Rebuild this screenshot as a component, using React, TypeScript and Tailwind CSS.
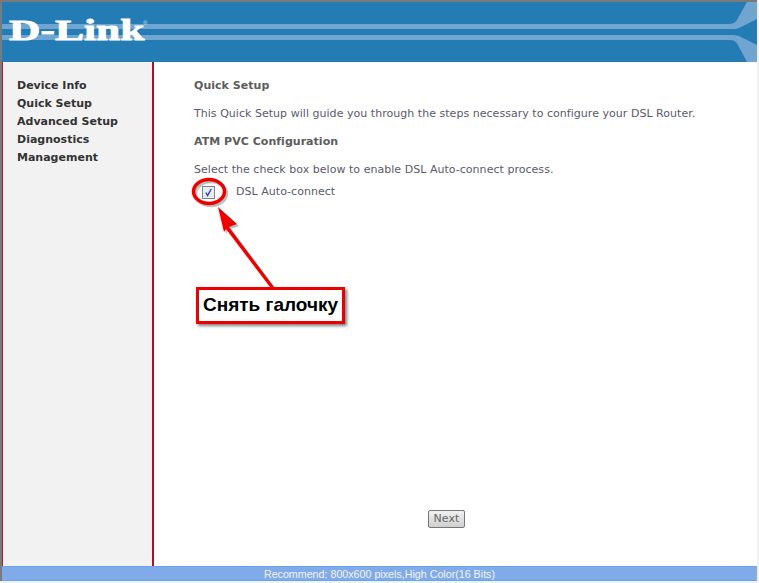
const sans = "font-['DejaVu_Sans',sans-serif]";

const menuItems = ["Device Info", "Quick Setup", "Advanced Setup", "Diagnostics", "Management"];

function HeaderArt() {
  return (
    <svg className="absolute inset-0 h-[60px] w-full" viewBox="0 0 755 60" fill="#6fa5d0">
      <rect x="0" y="22" width="730" height="5" />
      <rect x="0" y="33" width="730" height="5" />
      <path d="M726 22 C732 22 734 20 736 16 L745 0 L755 0 L755 17 L737 26 C735 27 732 27 726 27 Z" />
      <path d="M726 33 C732 33 734 33 737 34 L755 43 L755 60 L745 60 L736 43 C734 39 732 38 726 38 Z" />
    </svg>
  );
}

function Annotation() {
  return (
    <div className="absolute left-0 top-0">
      <svg className="absolute left-[180px] top-[170px] overflow-visible" width="110" height="130" viewBox="0 0 110 130" fill="none">
        <g opacity="0.35" transform="translate(2 2)">
          <ellipse cx="29" cy="21.5" rx="15.5" ry="12" stroke="#444" strokeWidth="3.5" />
          <path d="M38 37 L57 54 L49 57 L94 117 L90 117 L46 59 L44 62 Z" fill="#444" />
        </g>
        <ellipse cx="29" cy="21.5" rx="15.5" ry="12" stroke="#ee0000" strokeWidth="3.5" />
        <path d="M38 37 L57 54 L49 57 L94 117 L90 117 L46 59 L44 62 Z" fill="#ee0000" />
      </svg>
      <div className="absolute left-[196px] top-[287px] flex h-[37px] w-[149px] items-center justify-center whitespace-nowrap border-[3px] border-[#ee0000] bg-white font-['Liberation_Sans',sans-serif] text-[19px] font-bold text-black shadow-[2px_2px_3px_rgba(0,0,0,0.5)]">
        Снять галочку
      </div>
    </div>
  );
}

export default function App() {
  return (
    <div className={`relative flex h-[583px] w-[759px] flex-col overflow-hidden bg-[#f1f1f1] ${sans}`}>
      <div className="flex h-[581px] w-[757px] flex-col border-l-2 border-t-2 border-[#7a7a7a] bg-white">
        <header className="relative h-[60px] shrink-0 bg-[#247cb4]">
          <HeaderArt />
          <span className="absolute left-[7px] top-[12px] origin-left scale-x-[1.5] font-['Liberation_Serif',serif] text-[29px] font-bold leading-[32px] text-white [-webkit-text-stroke:0.8px_white]">
            D-Link
          </span>
          <span className="absolute left-[141px] top-[17px] font-['Liberation_Sans',sans-serif] text-[6px] leading-[8px] text-[#cfe0ee]">
            ®
          </span>
        </header>
        <div className="flex min-h-0 flex-1">
          <nav className="flex w-[152px] shrink-0 flex-col border-l border-r-2 border-l-[#b5172f] border-r-[#a5142c] bg-[#f2f2f2] pl-[14px] pt-[15px]">
            {menuItems.map((item) => (
              <a key={item} className="h-[18px] text-[11px] font-bold leading-[18px] text-[#333333]">
                {item}
              </a>
            ))}
          </nav>
          <main className="flex flex-1 flex-col pl-[40px] text-[11px] tracking-[0.034px] text-[#5a5a6e]">
            <h2 className="mt-[15px] font-bold leading-[18px] text-[#5c5c5c]">Quick Setup</h2>
            <p className="mt-[10px] leading-[18px]">
              This Quick Setup will guide you through the steps necessary to configure your DSL Router.
            </p>
            <h2 className="mt-[10px] font-bold leading-[18px] text-[#5c5c5c]">ATM PVC Configuration</h2>
            <p className="mt-[10px] leading-[18px]">Select the check box below to enable DSL Auto-connect process.</p>
            <div className="mt-[4px] flex h-[18px] items-center">
              <span className="ml-[8px] flex h-[13px] w-[13px] items-center justify-center border border-[#7a8698] bg-[#e8ecf2]">
                <svg width="9" height="9" viewBox="0 0 9 9" fill="none">
                  <path d="M1.8 4.5 L3.6 7.5 L7.2 1" stroke="#2a40b8" strokeWidth="1.4" />
                </svg>
              </span>
              <span className="ml-[21px]">DSL Auto-connect</span>
            </div>
            <div className="mt-auto flex justify-center pb-[38px] pr-[58px]">
              <button className="flex h-[18px] w-[37px] items-center justify-center rounded-[2px] border border-[#777777] bg-gradient-to-b from-[#f2f2f2] to-[#cfcfcf] text-[11px] text-[#666666]">
                Next
              </button>
            </div>
          </main>
        </div>
        <footer className="h-[15px] shrink-0 border-y border-[#66a3f0] bg-[#80abe8] pr-[262px] text-right font-['Liberation_Sans',sans-serif] text-[10.7px] leading-[14px] text-[#f4f4f4]">
          Recommend: 800x600 pixels,High Color(16 Bits)
        </footer>
      </div>
      <Annotation />
    </div>
  );
}
